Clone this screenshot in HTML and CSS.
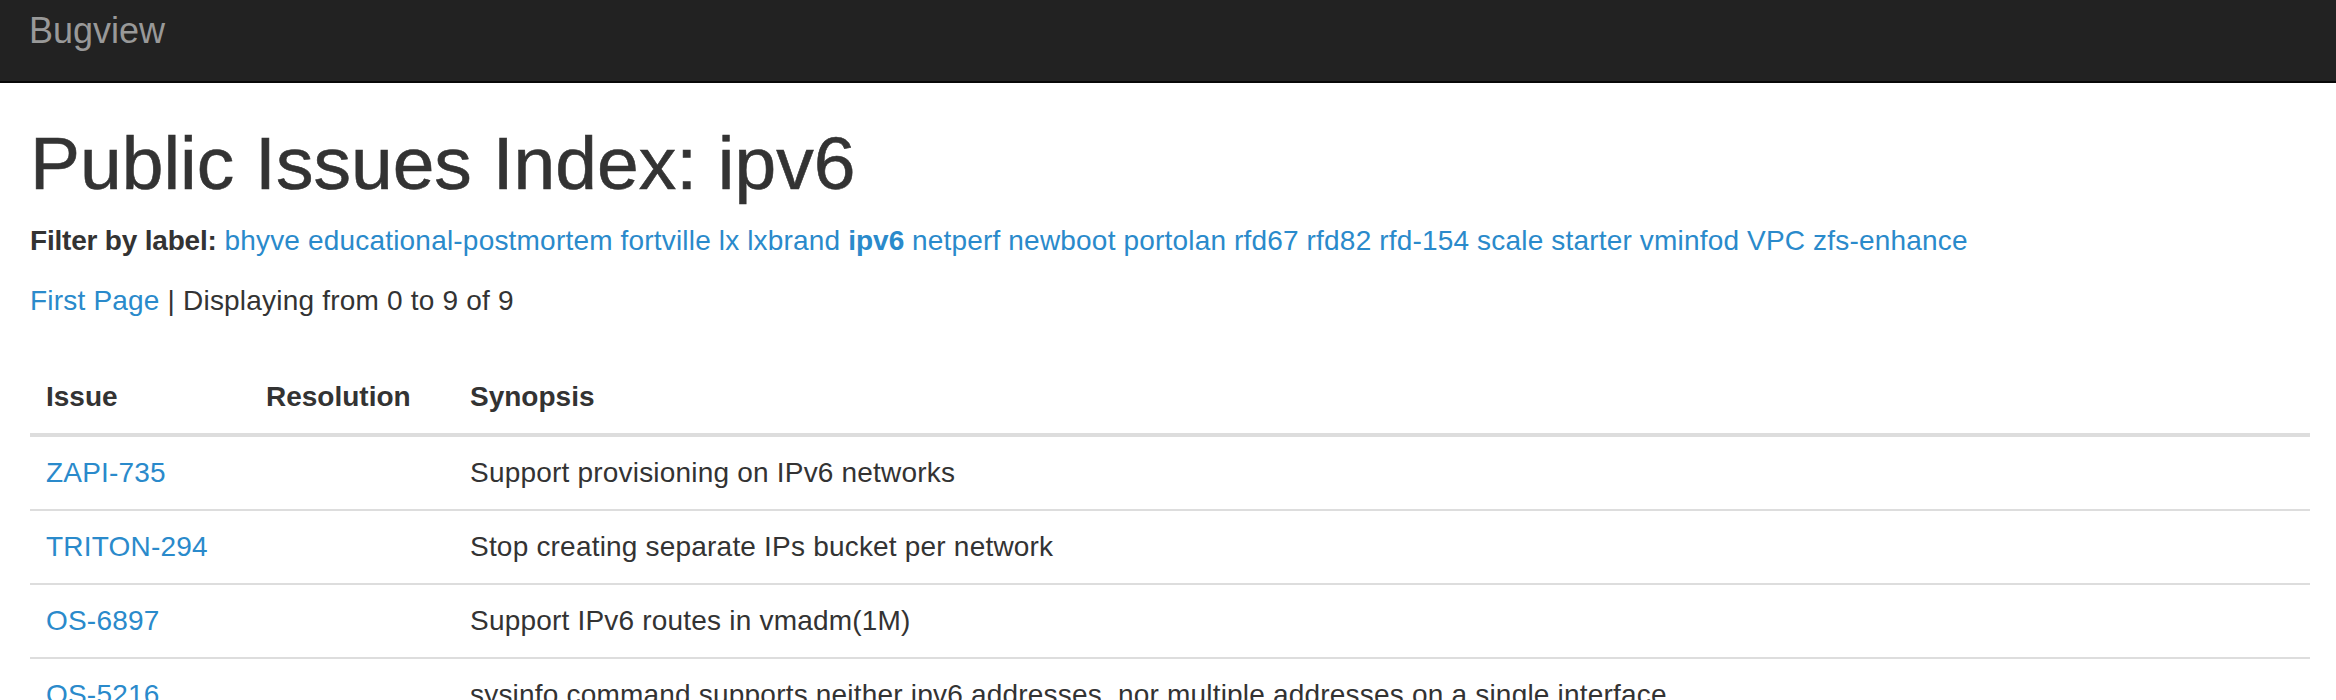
FILE: index.html
```html
<!DOCTYPE html>
<html lang="en">
<head>
<meta charset="utf-8">
<title>Bugview: Public Issues Index: ipv6</title>
<link rel="stylesheet" href="styles.css">
</head>
<body>
<header class="navbar">
  <a class="brand" href="#">Bugview</a>
</header>
<main class="container">
  <h1 class="title">Public Issues Index: ipv6</h1>
  <p class="filter"><strong>Filter by label:</strong> <a href="#">bhyve</a> <a href="#">educational-postmortem</a> <a href="#">fortville</a> <a href="#">lx</a> <a href="#">lxbrand</a> <a href="#" class="current">ipv6</a> <a href="#">netperf</a> <a href="#">newboot</a> <a href="#">portolan</a> <a href="#">rfd67</a> <a href="#">rfd82</a> <a href="#">rfd-154</a> <a href="#">scale</a> <a href="#">starter</a> <a href="#">vminfod</a> <a href="#">VPC</a> <a href="#">zfs-enhance</a></p>
  <p class="pager"><a href="#">First Page</a> | Displaying from 0 to 9 of 9</p>
  <table class="issues">
    <thead>
      <tr>
        <th class="col-issue">Issue</th>
        <th class="col-resolution">Resolution</th>
        <th class="col-synopsis">Synopsis</th>
      </tr>
    </thead>
    <tbody>
      <tr><td><a href="#">ZAPI-735</a></td><td></td><td>Support provisioning on IPv6 networks</td></tr>
      <tr><td><a href="#">TRITON-294</a></td><td></td><td>Stop creating separate IPs bucket per network</td></tr>
      <tr><td><a href="#">OS-6897</a></td><td></td><td>Support IPv6 routes in vmadm(1M)</td></tr>
      <tr><td><a href="#">OS-5216</a></td><td></td><td>sysinfo command supports neither ipv6 addresses, nor multiple addresses on a single interface</td></tr>
    </tbody>
  </table>
</main>
</body>
</html>
```
FILE: styles.css
```css
html, body {
  margin: 0;
  padding: 0;
  background: #fff;
}

body {
  font-family: "Liberation Sans", Arial, Helvetica, sans-serif;
  font-size: 28px;
  line-height: 40px;
  color: #333;
}

a {
  color: #2a8acb;
  text-decoration: none;
}

.navbar {
  height: 81px;
  background: #222;
  border-bottom: 2px solid #080808;
  box-sizing: content-box;
  display: flex;
  align-items: flex-start;
}

.brand {
  display: block;
  padding: 11px 0 0 29px;
  font-size: 36px;
  line-height: 40px;
  color: #999;
}

.container {
  padding: 0 26px 0 30px;
}

.title {
  margin: 40px 0 18px;
  font-size: 75px;
  line-height: 80px;
  font-weight: normal;
  color: #333;
  -webkit-text-stroke: 0.6px #333;
}

.filter {
  margin: 0 0 20px;
}

.filter strong {
  font-weight: bold;
  letter-spacing: -0.2px;
}

.filter a,
.pager,
.issues td {
  letter-spacing: 0.2px;
}

.filter .current {
  font-weight: bold;
  letter-spacing: 0;
}

.pager {
  margin: 0 0 40px;
}

.issues {
  width: 100%;
  border-collapse: collapse;
  border-spacing: 0;
  table-layout: fixed;
}

.issues th,
.issues td {
  padding: 16px;
  line-height: 40px;
  text-align: left;
  vertical-align: top;
  box-sizing: border-box;
  white-space: nowrap;
}

.issues th {
  font-weight: bold;
  border-bottom: 4px solid #ddd;
}

.issues td {
  border-top: 2px solid #ddd;
}

.col-issue {
  width: 220px;
}

.col-resolution {
  width: 204px;
}
```
